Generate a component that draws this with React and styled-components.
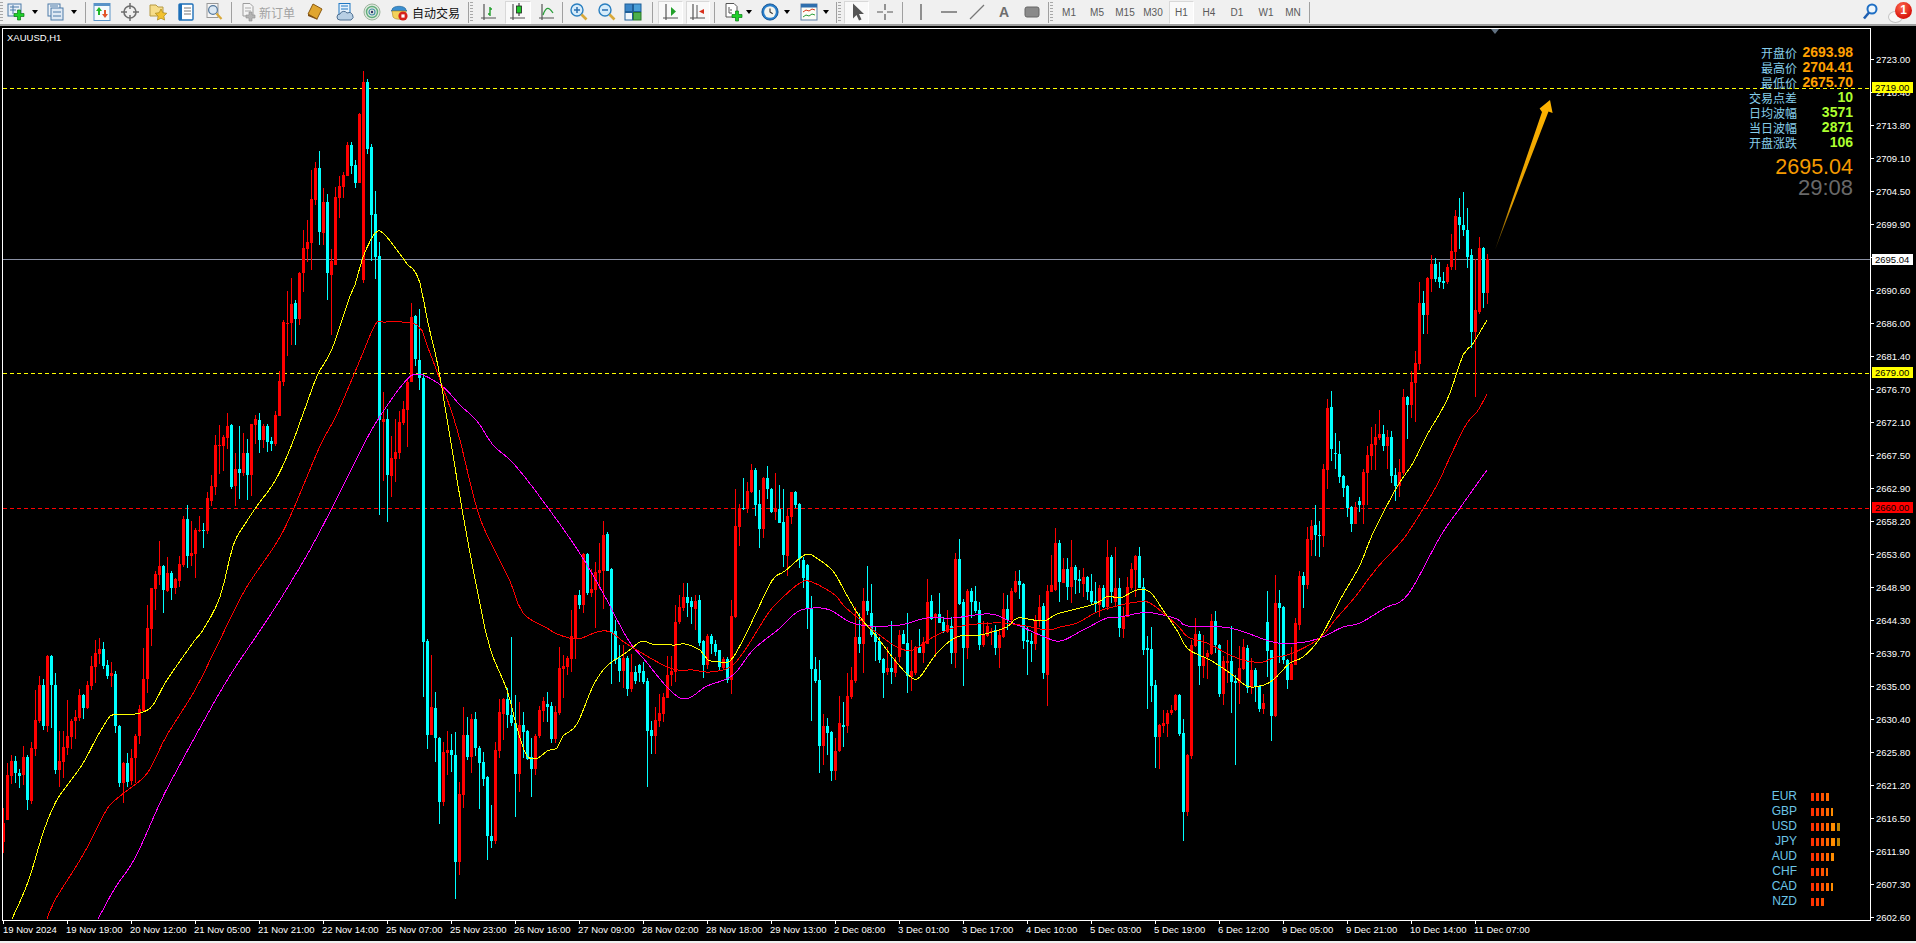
import React from "react";
import styled, { createGlobalStyle } from "styled-components";

const GlobalStyle = createGlobalStyle`
  html, body { margin: 0; padding: 0; background: #000; overflow: hidden; }
  #root { width: 1916px; height: 943px; }
`;

/* ---------- layout ---------- */
const Page = styled.div`
  display: flex; flex-direction: column; width: 1916px; height: 943px;
  font-family: "Liberation Sans", Arial, sans-serif; background: #000;
`;
const Toolbar = styled.div`
  display: flex; align-items: center; height: 24px; flex: none;
  background: #f0f0f0; border-bottom: 2px solid #a0a0a0;
`;
const Btn = styled.div`
  flex: none; display: flex; align-items: center; justify-content: center;
  width: ${p => p.$w}px; height: 23px; margin-left: ${p => p.$ml || 0}px; box-sizing: border-box;
  ${p => p.$pressed ? "background:#f9f9f9;border:1px solid #fff;border-top-color:#d8d8d8;border-left-color:#d8d8d8;" : ""}
`;
const LabelBtn = styled.div`
  flex: none; display: flex; align-items: center; gap: ${p => p.$gap}px; padding-left: 6px;
  width: ${p => p.$w}px; height: 23px; box-sizing: border-box;
`;
const BtnLabel = styled.span`
  font: 12px "Noto Sans CJK SC", sans-serif; letter-spacing: 0; white-space: nowrap;
  color: ${p => p.$off ? "#a2a2a2" : "#111"};
`;
const Tf = styled(Btn)`
  font: 10px "Liberation Sans", sans-serif; color: #5a5a5a;
`;
const Caret = styled.div`
  flex: none; width: ${p => p.$w}px; display: flex; justify-content: center;
  &::after { content: ""; border: 3.5px solid transparent; border-top: 4px solid #000; border-bottom: 0; }
`;
const Sep = styled.div`
  flex: none; width: 1px; height: 21px; background: #a0a0a0;
  margin-left: ${p => p.$l}px; margin-right: ${p => p.$r}px;
`;
const Grip = styled.div`
  flex: none; width: 3px; height: 20px; margin: 0 ${p => p.$r || 0}px 0 ${p => p.$l || 0}px;
  background: repeating-linear-gradient(to bottom, #a8a8a8 0 1px, transparent 1px 3px);
`;
const Spacer = styled.div`flex: 1;`;
const Notify = styled.div`
  position: relative; flex: none; width: 32px; height: 23px; margin-left: 4px;
`;
const Badge = styled.div`
  position: absolute; left: 11px; top: 1px; width: 17px; height: 17px; border-radius: 50%;
  background: radial-gradient(circle at 40% 30%, #ff6a50, #d8140c 70%); color: #fff;
  font: bold 12px/17px "Liberation Sans", sans-serif; text-align: center;
`;
const Bubble = styled.div`
  position: absolute; left: 4px; top: 10px; width: 13px; height: 10px; border-radius: 50%;
  background: #f8f8f8; border: 1px solid #c4c4c4;
`;
const ChartWindow = styled.div`
  position: relative; flex: 1; background: #000; overflow: hidden;
`;
const BottomEdge = styled.div`height: 2px; flex: none; background: #f0f0f0;`;
const ChartSvg = styled.svg`
  display: block; width: 1916px; height: 915px;
  text { font-family: "Liberation Sans", sans-serif; font-size: 9.5px; fill: #fff; }
`;
const InfoPanel = styled.div`
  position: absolute; top: 19px; right: 63px; display: flex; flex-direction: column; align-items: flex-end;
`;
const InfoRow = styled.div`
  display: grid; grid-template-columns: auto 56px; height: 15px; align-items: center; justify-content: end;
`;
const InfoLabel = styled.span`
  font: 12px/15px "Noto Sans CJK SC", sans-serif; color: #87ceeb; text-align: right;
`;
const InfoValue = styled.span`
  font: bold 14px/15px "Liberation Sans", sans-serif; text-align: right;
  color: ${p => p.$hot ? "#ffa000" : "#adff2f"};
`;
const BigPrice = styled.div`
  font: 21.5px/20px "Liberation Sans", sans-serif; color: #f59a00; margin-top: 7px;
`;
const Countdown = styled.div`
  font: 22px/20px "Liberation Sans", sans-serif; color: #696969; margin-top: 1px;
`;
const CurrencyPanel = styled.div`
  position: absolute; left: 1760px; top: 763px; display: grid;
  grid-template-columns: 37px auto; grid-auto-rows: 15px; column-gap: 14px; align-items: center;
`;
const CurrencyName = styled.span`
  font: 12px/15px "Liberation Sans", sans-serif; color: #6cc4e6; text-align: right;
`;
const Meter = styled.div`display: flex; gap: 2px; align-items: center;`;
const MeterBar = styled.i`
  display: block; height: 8px; width: ${p => p.$w}px; background: ${p => p.$c};
`;

/* ---------- toolbar icons ---------- */
const Ico = ({ children, s = 20 }) => <svg width={s} height={s} viewBox="0 0 20 20">{children}</svg>;
const GreenPlus = ({ x = 9, y = 9 }) => (
  <path transform={`translate(${x} ${y})`} d="M3.5 0h3v3.5H10v3H6.5V10h-3V6.5H0v-3h3.5z" fill="#1fd02a" stroke="#0a7a14" strokeWidth=".7" />
);
const Axes = () => <path d="M5 2v14M2 16h15M5 16v2" stroke="#555" strokeWidth="1.2" fill="none" />;
const icons = {
  newChart: <Ico><rect x="2" y="2" width="13" height="12" fill="#e9f0f8" stroke="#4c7ba8" /><path d="M4 5h9M4 8h6M7 3v9" stroke="#4c7ba8" /><GreenPlus x={8} y={8} /></Ico>,
  profile: <Ico><rect x="2" y="2" width="12" height="12" fill="#eef3f8" stroke="#4c7ba8" /><rect x="5" y="6" width="12" height="12" fill="#dfe9f4" stroke="#4c7ba8" /><path d="M4 4h8M7 10h8M7 14h8" stroke="#4c7ba8" /></Ico>,
  market: <Ico><rect x="2" y="1.5" width="16" height="17" fill="#f6fafd" stroke="#5a93c8" /><path d="M2 3h16" stroke="#5a93c8" strokeWidth="2" /><path d="M7 5l3 4H8v4H6V9H4z" fill="#21b82a" /><path d="M13 16l-3-4h2V8h2v4h2z" fill="#e2542a" /></Ico>,
  data: <Ico><circle cx="10" cy="10" r="6" fill="none" stroke="#6f6f6f" strokeWidth="1.6" /><path d="M10 1v6M10 13v6M1 10h6M13 10h6" stroke="#6f6f6f" strokeWidth="1.5" /></Ico>,
  folder: <Ico><path d="M2 3h6l2 2h5v9H2z" fill="#f6dd8a" stroke="#b69a45" /><path d="M13 7l1.8 3.7 4 .6-2.9 2.8.7 4-3.6-1.9-3.6 1.9.7-4-2.9-2.8 4-.6z" fill="#f2c230" stroke="#a8871b" strokeWidth=".7" /></Ico>,
  book: <Ico><rect x="3" y="2" width="14" height="16" rx="1" fill="#fff" stroke="#1d6fb8" strokeWidth="1.4" /><rect x="3" y="2" width="3" height="16" fill="#1d6fb8" /><path d="M8 6h7M8 9h7M8 12h7" stroke="#777" /></Ico>,
  search: <Ico><rect x="3" y="1.5" width="11" height="14" fill="#f5f5f5" stroke="#999" /><circle cx="9" cy="8" r="4.4" fill="#dbe8f4" stroke="#56799c" strokeWidth="1.2" /><path d="M12.5 11.5l5 5.5" stroke="#d8a93a" strokeWidth="2.2" /></Ico>,
  order: <Ico><path d="M4 1.5h7l3 3V14H4z" fill="#f4f4f4" stroke="#9d9d9d" /><path d="M6 6h6M6 9h6" stroke="#aaa" /><path d="M10 10h3v3h3v3h-3v3h-3v-3H7v-3h3z" fill="#b4b4b4" stroke="#8d8d8d" strokeWidth=".6" /></Ico>,
  market2: <Ico><path d="M8 2l9 5-5 10-9-5z" fill="#e0a630" stroke="#8a5a12" /><path d="M3 12l9 5 1 1-10-4z" fill="#7c4c10" /></Ico>,
  cloud: <Ico><rect x="4" y="1.5" width="11" height="12" fill="#e6f1fb" stroke="#1f78c4" /><path d="M6 4h7M6 7h7" stroke="#1f78c4" /><path d="M5 18a3 3 0 010-6 4 4 0 017-1 3.5 3.5 0 014 7z" fill="#b8cfe4" stroke="#4d6f92" /></Ico>,
  signal: <Ico><circle cx="10" cy="10" r="8" fill="#dfe9df" stroke="#9db49d" /><circle cx="10" cy="10" r="5.5" fill="none" stroke="#5fae7b" strokeWidth="1.4" /><circle cx="10" cy="10" r="3" fill="none" stroke="#4a90a8" strokeWidth="1.2" /><circle cx="10" cy="10" r="1.2" fill="#336" /></Ico>,
  auto: <Ico><path d="M3 8c0-5 14-5 14 0l1 1H2z" fill="#3b8fd0" stroke="#20608f" strokeWidth=".6" /><path d="M3 9h14l-1 6c-1 3-10 3-12 0z" fill="#f3d25a" stroke="#a8861c" strokeWidth=".6" /><circle cx="14" cy="14" r="4.6" fill="#d5221a" /><rect x="12.4" y="12.4" width="3.2" height="3.2" fill="#fff" /></Ico>,
  bars: <Ico><Axes /><path d="M11 5v9M9 12h2M11 7h2" stroke="#1e9e28" strokeWidth="1.4" fill="none" /></Ico>,
  candle: <Ico><Axes /><path d="M11 1v13" stroke="#222" /><rect x="8.5" y="4" width="5" height="7" fill="#1fc82a" stroke="#222" strokeWidth=".8" /></Ico>,
  line: <Ico><Axes /><path d="M6 13c3-9 6-8 10-2" stroke="#2a9e3a" strokeWidth="1.3" fill="none" /></Ico>,
  zoomIn: <Ico><circle cx="8" cy="8" r="6" fill="#d6ecfa" stroke="#2a7fc0" strokeWidth="1.4" /><path d="M5 8h6M8 5v6" stroke="#2a6fb0" strokeWidth="1.5" /><path d="M12.5 12.5l5 5" stroke="#d8a93a" strokeWidth="2.6" /></Ico>,
  zoomOut: <Ico><circle cx="8" cy="8" r="6" fill="#d6ecfa" stroke="#2a7fc0" strokeWidth="1.4" /><path d="M5 8h6" stroke="#2a6fb0" strokeWidth="1.5" /><path d="M12.5 12.5l5 5" stroke="#d8a93a" strokeWidth="2.6" /></Ico>,
  tile: <Ico><rect x="2" y="2" width="7.5" height="7.5" fill="#3a86c8" stroke="#1f5f98" /><rect x="10.5" y="2" width="7.5" height="7.5" fill="#4aa0d8" stroke="#1f5f98" /><rect x="2" y="10.5" width="7.5" height="7.5" fill="#f0f6fb" stroke="#1f5f98" /><rect x="10.5" y="10.5" width="7.5" height="7.5" fill="#4cb04c" stroke="#2a7a2a" /></Ico>,
  scroll: <Ico><Axes /><path d="M10 5v9l5-4.500z" fill="#22a02a" /></Ico>,
  shift: <Ico><Axes /><path d="M9 3v13" stroke="#555" /><path d="M16 7v5l-5-2.500z" fill="#d8301c" /></Ico>,
  template: <Ico><path d="M3 1.500h8l3 3V15H3z" fill="#fff" stroke="#555" /><path d="M6 5v6h3M8 7v2" stroke="#555" fill="none" /><GreenPlus x={9} y={9} /></Ico>,
  clock: <Ico s={18}><circle cx="10" cy="10" r="9" fill="#2a80cc" stroke="#0e4f90" /><circle cx="10" cy="10" r="6.500" fill="#f4f4ee" /><path d="M10 6v4l3 2" stroke="#333" strokeWidth="1.2" fill="none" /></Ico>,
  indicators: <Ico><rect x="2" y="2" width="16" height="16" fill="#fdfdf6" stroke="#5a7ea8" /><rect x="2" y="2" width="16" height="3.500" fill="#2f6fae" /><path d="M4 10l3-2 3 1 3-2 3 1" stroke="#d83a1c" fill="none" /><path d="M4 15l3-2 3 1 3-2 3 1" stroke="#2a9e3a" fill="none" /></Ico>,
  cursor: <Ico><path d="M6 1.500v15l3.500-3.500 2.500 5.500 2.500-1-2.500-5.500h5z" fill="#555" /></Ico>,
  cross: <Ico><path d="M10 2v6M10 12v6M2 10h6M12 10h6" stroke="#555" strokeWidth="1.2" /></Ico>,
  vline: <Ico><path d="M10 2v16" stroke="#666" strokeWidth="1.4" /></Ico>,
  hline: <Ico><path d="M2 10h16" stroke="#666" strokeWidth="1.4" /></Ico>,
  trend: <Ico><path d="M3 17L17 3" stroke="#777" strokeWidth="1.3" /></Ico>,
  rect: <Ico><rect x="3" y="5" width="14" height="10" rx="2" fill="#8a8a8a" stroke="#666" /></Ico>,
  find: <Ico><circle cx="12" cy="7" r="4.500" fill="#eef6fc" stroke="#1f6fc4" strokeWidth="2" /><path d="M9 10.500l-5 6" stroke="#1f5fb0" strokeWidth="2.600" /></Ico>,
};
const AGlyph = styled.span`font: bold 14px "Liberation Sans", sans-serif; color: #6e6e6e;`;

/* ---------- candle data: [red?, bodyTop, bodyBottom, wickTop, wickBottom], traced per strip ---------- */
const strips = [
  { y0: 0, k: 1, rows: [[1,823,842,808,853]] },
  { y0: 260, k: 2.8, rows: [
    [1,1442,1568,1408,1568],[1,1403,1445,1385,1467],[0,1403,1437,1390,1465],[0,1437,1445,1425,1478],[1,1392,1442,1360,1470],[0,1392,1512,1385,1540],[1,1366,1515,1350,1522],[1,1288,1370,1203,1388],[1,1190,1292,1165,1296],[0,1190,1305,1173,1315],
    [1,1108,1305,1105,1322],[0,1108,1190,1105,1310],[0,1190,1428,1155,1440],[1,1403,1428,1320,1475],[1,1364,1406,1318,1450],[1,1333,1366,1232,1385],[1,1291,1336,1285,1370],[1,1280,1292,1260,1340],[1,1218,1282,1200,1290],[0,1218,1255,1215,1285],
    [1,1190,1255,1180,1258],[1,1137,1192,1108,1205],[1,1100,1140,1064,1185],[1,1090,1103,1057,1130],[0,1090,1137,1070,1145],[0,1134,1165,1120,1172],[1,1157,1165,1125,1195],[0,1160,1305,1150,1325],[0,1305,1465,1303,1475],[1,1408,1465,1405,1520],
    [0,1408,1462,1380,1475],[1,1393,1460,1370,1470],[1,1333,1395,1328,1465],[1,1258,1333,1245,1355],[1,1173,1262,1085,1265],[1,1030,1173,965,1212],[1,918,1033,918,1082],[1,880,920,870,980],[1,857,882,787,910],[0,857,923,855,988],
    [1,876,926,832,930],[0,876,918,870,952],[1,893,918,890,935],[1,852,898,830,915],[1,725,855,718,860],[0,725,830,685,862],[1,820,830,730,858],[1,755,823,750,890],[1,756,760,717,762],[0,756,760,735,805],
    [1,665,760,650,767],[1,633,675,603,690],[1,518,635,490,658],[1,518,522,462,600],[1,495,522,490,590],[1,465,498,427,530],[0,462,635,460,640],[1,585,633,540,688],[0,585,596,465,668],[1,540,596,485,605],
    [0,540,602,500,672],[1,460,602,458,660],[1,445,462,435,515],[0,448,504,427,540],[1,465,505,460,525],[0,465,510,460,538],[0,507,515,495,535],[1,434,515,422,520],[1,340,437,310,437],[1,173,342,168,352],
    [1,175,178,87,268],[1,122,177,50,238],[0,120,165,112,238],[1,37,165,33,182],
  ]},
  { y0: 60, k: 3, rows: [
    [1,565,640,510,695],[1,546,567,480,605],[1,418,548,330,630],[1,325,420,306,435],[0,325,515,273,555],[1,426,518,385,555],[0,426,640,403,720],[1,603,645,567,825],[1,411,615,380,615],[1,378,413,348,473],
    [1,346,380,336,413],[1,255,348,246,348],[0,255,318,246,342],[0,315,370,300,384],[1,162,370,158,370],[1,66,660,33,670],[0,66,267,57,282],[0,261,465,252,603],[0,462,591,393,657],[0,588,1080,546,1365],
  ]},
  { y0: 280, k: 2.489, rows: [
    [1,345,353,280,500],[0,346,485,320,602],[1,443,487,388,540],[1,428,445,345,502],[1,353,430,325,445],[1,322,356,300,360],[1,253,323,250,415],[1,92,255,57,255],[0,90,197,88,215],[0,198,245,72,275],
    [0,245,900,235,1038],[0,898,1132,893,1167],[1,1063,1132,933,1132],[0,1065,1140,1025,1200],[0,1140,1299,1138,1355],[1,1175,1299,1150,1308],[1,1170,1178,1122,1232],[0,1170,1183,1130,1225],[0,1182,1449,1126,1540],[1,1279,1449,1250,1480],
    [1,1132,1282,1063,1313],[0,1132,1187,1088,1195],[1,1092,1187,1080,1227],[0,1093,1165,1075,1185],[0,1165,1202,1160,1317],[0,1200,1243,1175,1260],[0,1238,1385,1235,1443],[0,1385,1396,1307,1413],[1,1170,1396,1150,1403],[1,1075,1172,1043,1190],
    [1,1043,1080,1040,1145],[0,1043,1083,1015,1115],[0,1083,1103,889,1110],[0,1103,1230,1033,1336],[1,1107,1230,1050,1274],[0,1108,1125,1075,1190],[0,1122,1192,1120,1195],[0,1187,1217,1140,1287],[1,1135,1217,1130,1232],[1,1070,1135,1060,1140],
    [1,1048,1073,1038,1100],[0,1055,1063,1025,1100],[0,1060,1143,1050,1152],[1,1075,1142,1060,1152],[1,965,1078,913,1083],[1,961,968,933,1040],[1,940,963,935,983],[1,886,943,822,975],[1,783,890,783,943],[0,783,808,772,820],
    [1,683,808,680,830],[0,683,778,680,785],[1,768,778,720,790],[1,727,772,703,865],[1,722,730,655,770],[1,635,724,600,820],[0,632,724,627,725],[0,719,878,717,1005],[0,874,945,847,955],[0,940,973,908,1000],
    [1,942,973,908,1015],[0,942,1018,935,1035],[1,976,1018,930,1025],[0,976,998,960,1005],[0,958,977,955,1000],[0,972,1000,950,1005],[0,998,1122,990,1263],[0,1120,1135,1098,1180],[1,1095,1135,1063,1180],[1,1077,1098,1030,1113],
    [1,1037,1080,1028,1100],[1,982,1040,935,1040],[1,972,983,935,1010],[1,851,975,810,1000],[1,813,851,785,855],[1,790,816,753,825],[0,790,803,755,840],[0,800,815,790,855],[1,798,820,785,870],[0,796,903,783,910],
    [0,898,958,895,990],[1,886,958,880,968],[0,885,907,880,930],[0,905,927,895,935],[0,922,963,920,970],
  ]},
  { y0: 440, k: 3, rows: [
    [1,657,683,650,690],[0,657,720,650,730],[1,528,720,480,762],[1,258,531,148,535],[1,206,262,193,318],[0,205,207,113,210],[1,152,208,125,220],[1,90,155,72,158],[0,90,195,85,228],[0,192,267,150,324],
    [1,114,267,112,295],[0,114,147,78,178],[0,147,216,145,220],[1,206,216,100,240],[0,206,248,135,250],[0,246,345,148,382],[1,228,348,205,408],[1,156,231,155,252],[0,156,194,154,205],[0,192,358,190,385],
    [0,360,414,352,445],[0,375,508,372,567],[0,508,687,468,843],[0,687,723,652,730],[0,720,918,660,998],[1,858,918,822,975],[0,858,880,835,945],[0,876,993,873,1023],[1,934,993,895,1020],[1,850,934,768,935],
    [0,855,861,785,920],[1,768,858,698,880],[1,720,772,680,776],[1,591,724,500,728],[0,591,612,520,640],[1,483,612,445,698],[0,483,513,378,525],[0,519,585,432,590],[0,583,606,560,663],[0,604,660,590,670],
    [0,657,698,655,773],[1,683,696,620,705],[0,684,696,543,733],[1,663,700,650,710],[1,585,652,570,665],[0,582,612,570,612],[0,609,708,520,760],[1,693,712,600,752],[1,621,699,617,705],[0,621,640,568,640],
    [1,606,639,592,670],[1,486,611,417,612],[0,483,537,465,540],[1,522,535,518,650],[0,522,549,460,550],[0,546,573,530,578],[1,555,575,510,580],[0,558,639,530,672],[1,357,639,340,684],[0,357,492,297,495],
    [0,486,624,478,738],[1,453,624,447,657],[0,453,486,445,535],[0,483,513,438,520],[0,510,615,485,630],[1,585,615,543,620],[1,558,588,546,590],[1,573,576,565,615],[0,570,624,555,645],[1,585,624,570,684],
    [1,507,591,460,595],[0,507,540,465,570],[1,453,540,445,545],[1,423,456,392,458],[0,423,435,390,477],[0,432,603,430,627],[0,600,606,560,705],[0,603,612,580,665],[1,540,612,525,630],[1,501,540,465,560],
    [0,498,699,490,717],[1,453,705,435,798],[1,435,456,345,456],[1,309,450,264,452],[0,309,426,300,486],[1,387,429,355,430],[0,387,441,355,480],[1,381,441,300,490],[0,381,420,375,462],[0,417,423,390,460],
    [1,411,432,385,470],[0,411,456,408,480],[0,453,486,402,495],[0,483,492,425,520],[1,444,495,435,532],[0,444,501,435,505],[1,351,501,300,510],[0,351,456,345,490],[1,444,486,320,500],[0,444,565,414,590],
  ]},
  { y0: 500, k: 3, rows: [
    [1,348,387,320,413],[1,261,351,230,351],[1,207,264,190,270],[1,167,210,165,290],[0,167,264,141,265],[0,261,450,235,465],[0,444,450,408,627],[0,447,558,381,606],[0,555,711,540,804],[1,675,711,672,807],
    [1,669,678,630,700],[1,639,672,630,711],[1,630,639,615,645],[1,585,630,582,633],[0,585,702,583,708],[0,699,936,657,1023],[1,765,936,762,948],[1,435,768,420,777],[1,402,438,354,440],[0,402,498,393,555],
    [1,471,498,405,534],[1,459,471,450,537],[1,363,462,342,465],[0,363,435,333,459],[0,435,582,432,591],[1,483,582,468,615],[1,483,488,420,550],[0,483,546,378,639],[0,543,549,525,795],[1,504,549,438,612],
    [1,441,507,417,510],[0,444,564,435,579],[1,510,561,474,582],[0,510,561,505,606],[0,558,627,555,636],[1,609,627,582,642],[0,366,453,273,531],[0,450,648,450,723],[1,309,648,225,651],[0,309,324,270,490],
    [0,321,480,318,492],[0,480,540,478,567],[1,492,540,440,540],[1,369,495,354,495],
  ]},
  { y0: 360, k: 3, rows: [
    [1,648,795,633,810],[0,648,675,636,744],[1,537,675,500,687],[1,498,540,480,588],[0,495,525,435,588],[0,525,528,483,590],[1,327,527,312,560],[1,144,330,117,387],[0,141,267,93,303],[0,280,283,220,327],
    [0,282,351,243,369],[0,348,384,345,411],[0,378,444,375,471],[0,441,492,438,516],[1,441,492,426,492],[0,423,435,411,456],[1,336,435,327,492],[1,285,339,258,435],[1,252,288,201,330],[1,231,255,192,330],
    [1,222,234,150,240],[0,222,258,195,273],[1,231,258,210,327],[0,231,348,213,369],[0,345,378,324,423],[1,336,378,297,411],
  ]},
  { y0: 170, k: 3, rows: [
    [1,681,909,657,915],[0,681,705,678,807],[1,636,705,603,744],[1,579,639,543,756],[1,399,582,336,600],[0,399,435,363,492],[1,324,435,321,492],[1,282,327,255,366],[0,282,327,264,336],[0,321,336,276,354],
    [0,333,339,306,357],[1,291,336,282,342],[1,243,291,192,300],[1,138,246,120,300],[0,141,165,84,237],[0,165,180,66,198],[0,180,261,114,294],[0,255,486,237,534],[1,420,486,267,681],[1,234,426,201,432],
    [0,234,369,231,414],[1,267,369,252,402],
  ]},
];
const candles = strips.flatMap(s =>
  s.rows.map(([red, t, b, wt, wb]) => ({
    red,
    t: Math.round(s.y0 + t / s.k), b: Math.round(s.y0 + b / s.k),
    wt: Math.round(s.y0 + wt / s.k), wb: Math.round(s.y0 + wb / s.k),
  }))
);

/* moving averages: traced control points, resampled per bar through a Catmull-Rom curve */
const smooth = str => {
  const pts = str.split(" ").map(p => p.split(",").map(Number));
  const out = [];
  for (let i = 0; i < pts.length - 1; i++) {
    const a = pts[Math.max(0, i - 1)], b = pts[i], c = pts[i + 1], d = pts[Math.min(pts.length - 1, i + 2)];
    const n = Math.max(1, Math.round((c[0] - b[0]) / 4));
    for (let j = 0; j < n; j++) {
      const t = j / n, t2 = t * t, t3 = t2 * t;
      const f = k => 0.5 * (2 * b[k] + (c[k] - a[k]) * t + (2 * a[k] - 5 * b[k] + 4 * c[k] - d[k]) * t2 + (3 * b[k] - a[k] - 3 * c[k] + d[k]) * t3);
      out.push(`${f(0).toFixed(1)},${f(1).toFixed(1)}`);
    }
  }
  out.push(pts[pts.length - 1].join(","));
  return out.join(" ");
};
const yellowMA = smooth("12,919 28,882 43,833 52,810 60,795 75,775 85,760 97,737 110,716 115,714 127,715 143,712 153,705 167,680 195,640 203,630 220,597 233,546 245,524 257,506 275,481 290,449 307,403 318,374 332,349 350,296 355,285 363,257 375,233 383,233 397,250 408,265 413,269 420,283 428,323 438,366 450,437 462,509 477,589 490,648 507,690 517,728 527,756 538,758 547,751 557,748 563,736 577,724 593,686 607,666 627,652 642,641 652,644 675,645 685,644 700,650 708,660 720,662 730,661 743,640 767,590 775,577 785,571 800,558 808,554 815,557 833,571 845,592 860,617 877,637 897,663 912,678 920,677 937,653 957,637 980,635 1007,627 1018,618 1043,621 1057,614 1080,608 1097,603 1108,596 1120,598 1137,590 1150,592 1163,610 1178,632 1188,649 1210,660 1230,673 1247,686 1260,686 1273,680 1290,663 1303,657 1320,638 1340,600 1360,565 1373,533 1397,487 1413,463 1427,435 1440,413 1450,393 1463,355 1472,345 1487,320");
const redMA = smooth("47,919 55,900 83,855 102,818 113,802 143,778 153,763 167,735 195,690 217,646 245,590 277,542 293,510 320,446 337,414 360,360 375,325 383,322 417,325 428,348 440,380 457,429 477,509 492,545 510,581 523,613 547,628 557,634 577,639 597,632 610,632 630,646 670,668 693,670 710,672 730,667 745,650 767,615 780,600 800,583 812,582 835,595 845,607 877,633 897,647 913,650 933,637 957,627 993,623 1020,625 1047,630 1060,627 1077,623 1097,612 1117,606 1137,602 1150,603 1177,625 1188,637 1207,643 1230,655 1247,661 1263,662 1273,658 1293,653 1320,638 1335,620 1355,597 1377,568 1400,543 1413,525 1437,485 1450,457 1467,423 1477,412 1487,394");
const magentaMA = smooth("98,919 115,888 135,858 160,803 177,770 223,687 257,635 278,603 307,555 332,508 360,452 377,421 403,384 418,374 442,386 460,405 477,421 493,445 513,463 540,497 577,549 603,593 627,638 643,658 680,698 707,686 733,675 753,650 780,628 797,612 813,608 830,610 850,622 870,626 900,625 927,618 953,618 990,614 1013,623 1040,635 1060,641 1083,630 1107,618 1120,617 1140,613 1153,613 1177,619 1188,626 1230,628 1273,642 1297,643 1320,638 1343,627 1360,623 1387,607 1400,602 1413,587 1440,537 1460,508 1487,470");

const priceLabels = ["2723.00","2718.40","2713.80","2709.10","2704.50","2699.90","2695.30","2690.60","2686.00","2681.40","2676.70","2672.10","2667.50","2662.90","2658.20","2653.60","2648.90","2644.30","2639.70","2635.00","2630.40","2625.80","2621.20","2616.50","2611.90","2607.30","2602.60"];
const timeLabels = ["19 Nov 2024","19 Nov 19:00","20 Nov 12:00","21 Nov 05:00","21 Nov 21:00","22 Nov 14:00","25 Nov 07:00","25 Nov 23:00","26 Nov 16:00","27 Nov 09:00","28 Nov 02:00","28 Nov 18:00","29 Nov 13:00","2 Dec 08:00","3 Dec 01:00","3 Dec 17:00","4 Dec 10:00","5 Dec 03:00","5 Dec 19:00","6 Dec 12:00","9 Dec 05:00","9 Dec 21:00","10 Dec 14:00","11 Dec 07:00"];
const tags = [
  { y: 88, label: "2719.00", bg: "#ffff00" },
  { y: 260, label: "2695.04", bg: "#ffffff" },
  { y: 373, label: "2679.00", bg: "#ffff00" },
  { y: 508, label: "2660.00", bg: "#ff0000" },
];
const info = [
  ["开盘价", "2693.98", true], ["最高价", "2704.41", true], ["最低价", "2675.70", true],
  ["交易点差", "10"], ["日均波幅", "3571"], ["当日波幅", "2871"], ["开盘涨跌", "106"],
];
const C = ["#ff3000", "#ff3c00", "#ff5000", "#ff6a00", "#ff8c00", "#bf8400"];
const currencies = [
  ["EUR", [3,3,3,3]], ["GBP", [3,3,3,3,2]], ["USD", [3,3,3,3,4,3]], ["JPY", [3,3,3,3,4,3]],
  ["AUD", [3,3,3,3,3]], ["CHF", [3,3,3,2]], ["CAD", [3,3,3,3,2]], ["NZD", [3,3,3]],
];

const Chart = () => (
  <ChartSvg viewBox="0 26 1916 915">
    <defs>
      <linearGradient id="arrowFade" x1="1495" y1="250" x2="1550" y2="100" gradientUnits="userSpaceOnUse">
        <stop offset="0" stopColor="#4a3600" />
        <stop offset=".3" stopColor="#e09c00" />
        <stop offset="1" stopColor="#ffb400" />
      </linearGradient>
    </defs>
    <g shapeRendering="crispEdges">
      <path d="M3 88.500H1870" stroke="#ffff00" strokeDasharray="4 3" />
      <path d="M3 373.500H1870" stroke="#ffff00" strokeDasharray="4 3" />
      <path d="M3 508.500H1870" stroke="#ff0000" strokeDasharray="4 3" />
      <path d="M3 259.500H1870" stroke="#8a90a4" />
      {candles.map((c, i) => {
        const x = 3 + 4 * i;
        const col = c.red ? "#ff0000" : "#00ffff";
        return (
          <g key={i} fill={col}>
            <rect x={x} y={c.wt} width="1" height={Math.max(1, c.wb - c.wt)} />
            <rect x={x - 1} y={c.t} width="3" height={Math.max(1, c.b - c.t)} />
          </g>
        );
      })}
      <polyline points={magentaMA} fill="none" stroke="#ff00ff" />
      <polyline points={redMA} fill="none" stroke="#ff0000" />
      <polyline points={yellowMA} fill="none" stroke="#ffff00" />
      <path d="M2.500 28.500H1870.500V920.500H2.500Z" fill="none" stroke="#fff" />
      {priceLabels.map((_, i) => <rect key={i} x="1871" y={59 + 33 * i} width="3" height="1" fill="#fff" />)}
      {timeLabels.map((_, i) => <rect key={i} x={3 + 64 * i} y="921" width="1" height="3" fill="#fff" />)}
    </g>
    <path d="M1491 29h8l-4 5z" fill="#607080" />
    <polygon points="1495,250 1542,112 1539.600,108.500 1550,100 1552.600,113 1548.500,111.500" fill="url(#arrowFade)" />
    {priceLabels.map((t, i) => <text key={t} x="1876" y={62.5 + 33 * i}>{t}</text>)}
    {timeLabels.map((t, i) => <text key={t} x={i === 0 ? 3 : 2 + 64 * i} y="933">{t}</text>)}
    <text x="7" y="40.500">XAUUSD,H1</text>
    {tags.map(t => (
      <g key={t.label}>
        <rect x="1872" y={t.y - 6} width="41" height="11" fill={t.bg} shapeRendering="crispEdges" />
        <text x="1875" y={t.y + 2.5} style={{ fill: "#000" }}>{t.label}</text>
      </g>
    ))}
  </ChartSvg>
);

const B = ({ n, w = 28, ml, pressed }) => <Btn $w={w} $ml={ml} $pressed={pressed}>{icons[n]}</Btn>;

export default function App() {
  return (
    <Page>
      <GlobalStyle />
      <Toolbar>
        <Grip $l={0} $r={1} />
        <B n="newChart" w={24} />
        <Caret $w={14} />
        <B n="profile" />
        <Caret $w={8} />
        <Sep $l={7} $r={2} />
        <B n="market" /><B n="data" /><B n="folder" /><B n="book" /><B n="search" />
        <Sep $l={3} $r={1} />
        <LabelBtn $w={68} $gap={0}>{icons.order}<BtnLabel $off>新订单</BtnLabel></LabelBtn>
        <B n="market2" />
        <B n="cloud" w={32} />
        <B n="signal" w={22} />
        <LabelBtn $w={82} $gap={3}>{icons.auto}<BtnLabel>自动交易</BtnLabel></LabelBtn>
        <Sep $l={3} $r={1} />
        <Grip $l={0} $r={1} />
        <B n="bars" w={30} />
        <B n="candle" w={26} ml={1} pressed />
        <B n="line" w={30} ml={1} />
        <Sep $l={0} $r={3} />
        <B n="zoomIn" w={26} /><B n="zoomOut" w={30} /><B n="tile" w={22} />
        <Sep $l={8} $r={4} />
        <B n="scroll" w={25} ml={1} pressed />
        <B n="shift" w={24} ml={3} pressed />
        <Sep $l={4} $r={5} />
        <B n="template" w={26} /><Caret $w={6} />
        <B n="clock" ml={4} /><Caret $w={6} />
        <B n="indicators" ml={5} /><Caret $w={6} />
        <Sep $l={7} $r={1} />
        <Grip $l={0} $r={3} />
        <B n="cursor" w={25} pressed />
        <B n="cross" ml={2} />
        <Sep $l={3} $r={1} />
        <B n="vline" ml={3} /><B n="hline" /><B n="trend" />
        <Btn $w={26}><AGlyph>A</AGlyph></Btn>
        <B n="rect" w={30} />
        <Sep $l={1} $r={1} />
        <Grip $l={0} $r={1} />
        {["M1","M5","M15","M30"].map((t, i) => <Tf key={t} $w={28} $ml={i === 0 ? 1 : 0}>{t}</Tf>)}
        <Tf $w={25} $ml={2} $pressed>H1</Tf>
        <Tf $w={28} $ml={1}>H4</Tf>
        <Tf $w={28}>D1</Tf>
        <Tf $w={28} $ml={1}>W1</Tf>
        <Tf $w={26}>MN</Tf>
        <Sep $l={3} $r={0} />
        <Spacer />
        <Btn $w={20}>{icons.find}</Btn>
        <Notify><Bubble /><Badge>1</Badge></Notify>
      </Toolbar>
      <ChartWindow>
        <Chart />
        <InfoPanel>
          {info.map(([l, v, hot]) => (
            <InfoRow key={l}><InfoLabel>{l}</InfoLabel><InfoValue $hot={hot}>{v}</InfoValue></InfoRow>
          ))}
          <BigPrice>2695.04</BigPrice>
          <Countdown>29:08</Countdown>
        </InfoPanel>
        <CurrencyPanel>
          {currencies.map(([name, bars]) => (
            <React.Fragment key={name}>
              <CurrencyName>{name}</CurrencyName>
              <Meter>{bars.map((w, i) => <MeterBar key={i} $w={w} $c={C[i]} />)}</Meter>
            </React.Fragment>
          ))}
        </CurrencyPanel>
      </ChartWindow>
      <BottomEdge />
    </Page>
  );
}
